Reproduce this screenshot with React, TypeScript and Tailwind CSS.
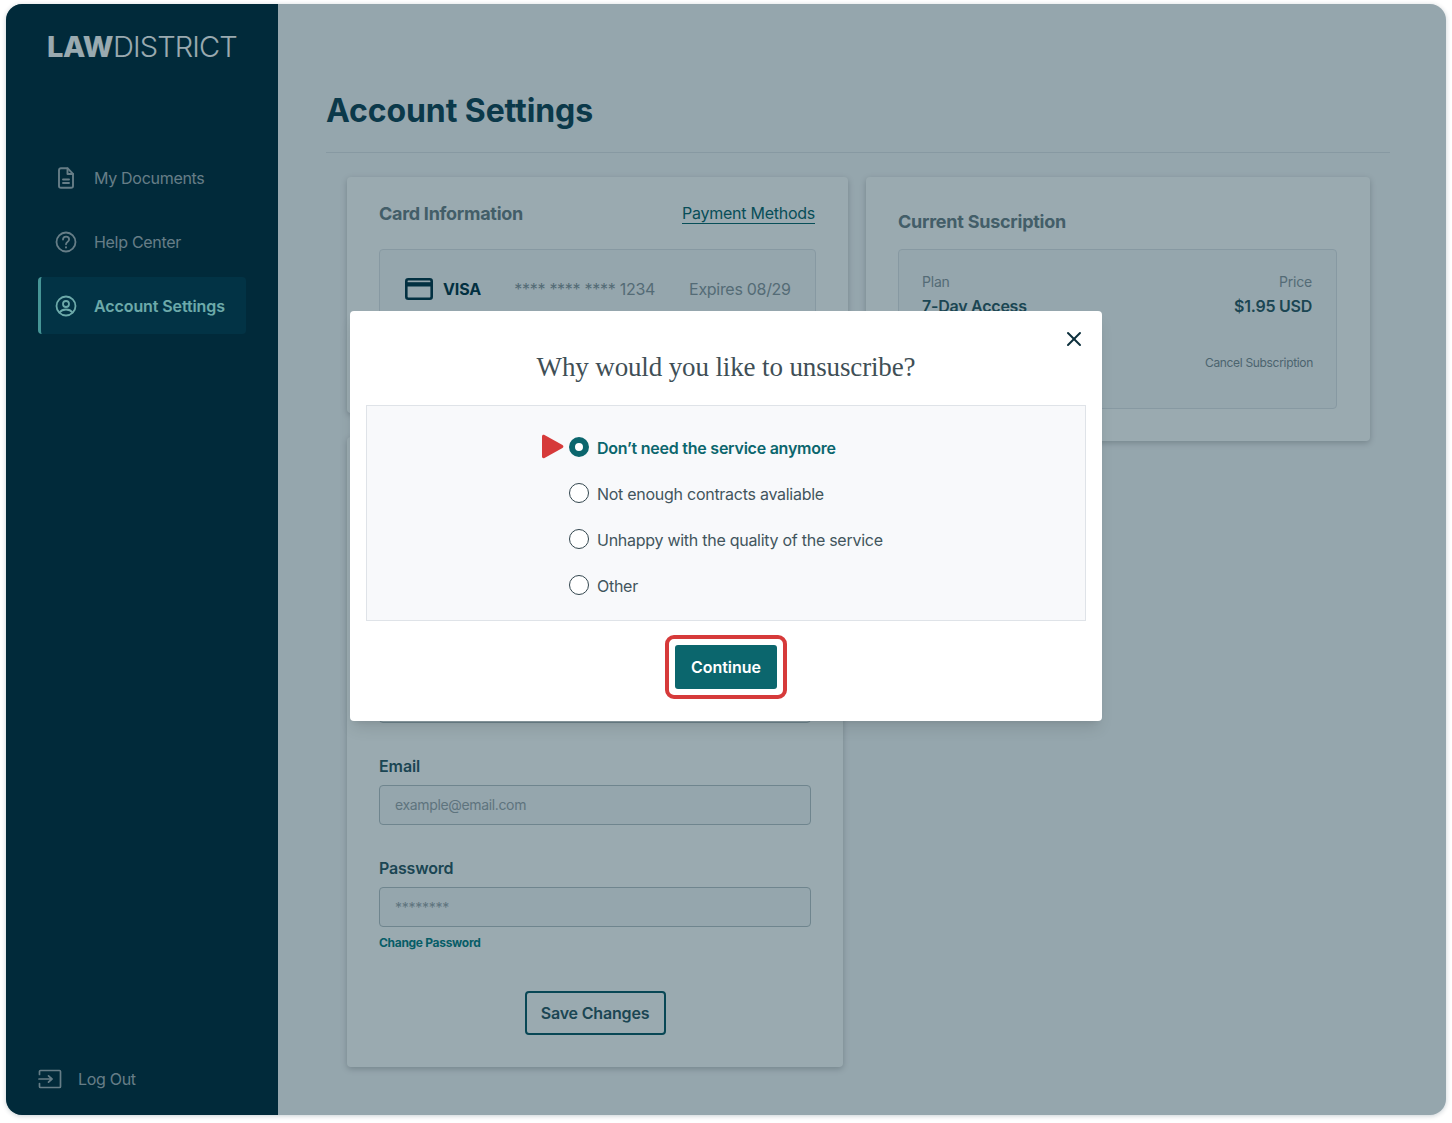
import React from 'react';
import { X } from 'lucide-react';

const DocIcon = () => (
    <svg width="20" height="22" viewBox="0 0 20 22" fill="none" stroke="currentColor" strokeWidth="1.9" strokeLinejoin="round" strokeLinecap="round">
        <path d="M3 3.200C3 2 3.800 1.200 5 1.200h6.500L17 6.800V19c0 1-.8 1.800-2 1.800H5c-1.200 0-2-.8-2-1.800V3.200z" />
        <path d="M11.500 1.500V7H17" />
        <path d="M7 12.500h6M7 16h6" />
    </svg>
);

const HelpIcon = () => (
    <svg width="22" height="22" viewBox="0 0 22 22" fill="none" stroke="currentColor" strokeWidth="1.8" strokeLinecap="round">
        <circle cx="11" cy="11" r="9.500" />
        <path d="M8 8.600c0-1.800 1.400-3 3.100-3 1.700 0 3 1.200 3 2.800 0 2.400-3.100 2.500-3.100 4.900" />
        <path d="M11 16.300v.1" strokeWidth="2" />
    </svg>
);

const UserIcon = () => (
    <svg width="22" height="22" viewBox="0 0 22 22" fill="none" stroke="currentColor" strokeWidth="1.8" strokeLinecap="round">
        <circle cx="11" cy="11" r="9.500" />
        <circle cx="11" cy="9" r="3" />
        <path d="M4.500 17.500c1.500-2 3.800-3 6.500-3s5 1 6.500 3" />
    </svg>
);

const LogOutIcon = () => (
    <svg width="24" height="20" viewBox="0 0 24 20" fill="none" stroke="currentColor" strokeWidth="1.7" strokeLinejoin="round" strokeLinecap="round">
        <path d="M1.500 5.500V2.500c0-.6.400-1 1-1h19c.6 0 1 .4 1 1v15c0 .6-.4 1-1 1h-19c-.6 0-1-.4-1-1v-3" />
        <path d="M1 10h13M10.500 6.800 14 10l-3.500 3.200" />
    </svg>
);

const CardIcon = () => (
    <svg width="28" height="22" viewBox="0 0 28 22" fill="none">
        <rect x="1.300" y="1.300" width="25.400" height="19.400" rx="2" stroke="#033446" strokeWidth="2.600" />
        <rect x="1.300" y="4.200" width="25.400" height="4.300" fill="#033446" />
    </svg>
);

const reasons = ['Not enough contracts avaliable', 'Unhappy with the quality of the service', 'Other'];

const App: React.FC = () => {
    return (
        <div className="h-[1123px] w-[1452px] bg-white pl-[6px] pt-[4px] overflow-hidden font-['Inter',sans-serif]">
            <div className="relative flex h-[1111px] w-[1440px] overflow-hidden rounded-2xl bg-[#f7f8fa] shadow-[0_1px_5px_rgba(3,42,58,0.22)]">
                {/* sidebar */}
                <aside className="flex w-[272px] shrink-0 flex-col bg-[#012b3b] pb-[24px] pl-[32px] pr-[32px]">
                    <div className="mt-[24px] ml-[9px] text-[29px] leading-[38px] text-white">
                        <span className="font-extrabold tracking-[-0.4px]">LAW</span>
                        <span className="font-light tracking-[-0.85px]">DISTRICT</span>
                    </div>
                    <nav className="mt-[83px] flex flex-col gap-[7px]">
                        <a className="flex h-[57px] items-center gap-[18px] pl-[18px] text-base tracking-[-0.3px] text-[#a9b5bb]">
                            <span className="flex w-[20px] justify-center"><DocIcon /></span>
                            My Documents
                        </a>
                        <a className="flex h-[57px] items-center gap-[18px] pl-[18px] text-base tracking-[-0.3px] text-[#a9b5bb]">
                            <span className="-mx-px"><HelpIcon /></span>
                            Help Center
                        </a>
                        <a className="flex h-[57px] w-[208px] items-center gap-[18px] rounded border-l-[3px] border-[#73ddd4] bg-[#03394d] pl-[15px] text-base font-semibold tracking-[-0.1px] text-[#b4fff5]">
                            <span className="-mx-px"><UserIcon /></span>
                            Account Settings
                        </a>
                    </nav>
                    <a className="mt-auto flex items-center gap-[16px] text-base tracking-[-0.3px] text-[#a9b5bb]">
                        <LogOutIcon />
                        Log Out
                    </a>
                </aside>

                {/* page */}
                <main className="flex-1 pl-[48px] pr-[56px]">
                    <h1 className="mt-[85px] text-[32px] font-bold leading-[44px] tracking-[-0.1px] text-[#124455]">Account Settings</h1>
                    <div className="mt-[19px] border-t border-[#dfe3e8]" />
                    <div className="mt-[24px] flex items-start gap-[18px] pl-[21px]">
                        <div className="flex w-[501px] flex-col gap-[24px]">
                            <section className="h-[236px] rounded bg-white px-[32px] pt-[23px] shadow-[0_2px_6px_rgba(0,0,0,0.22)]">
                                <div className="flex items-center justify-between">
                                    <h2 className="text-lg font-bold tracking-[-0.28px] text-[#6e8088]">Card Information</h2>
                                    <a className="mr-px border-b border-[#0b666d] text-base leading-[19px] tracking-[-0.25px] text-[#0b666d]">Payment Methods</a>
                                </div>
                                <div className="mt-[21px] flex h-[132px] items-start rounded border border-[#dfe3e8] bg-[#f7f8fa] pl-[25px] pt-[28px]">
                                    <CardIcon />
                                    <span className="ml-[10px] -mt-px font-bold tracking-[-0.1px] text-[#033446]">VISA</span>
                                    <span className="ml-[33px] -mt-px tracking-[-0.28px] text-[#8b979e]">**** **** **** 1234</span>
                                    <span className="ml-[34px] -mt-px tracking-[-0.3px] text-[#8b979e]">Expires 08/29</span>
                                </div>
                            </section>
                            <section className="flex h-[630px] w-[496px] flex-col rounded bg-white px-[32px] pb-[32px] shadow-[0_2px_6px_rgba(0,0,0,0.22)]">
                                <div className="mt-auto h-[40px] rounded border border-[#b7c1c6] bg-[#f7f8fa]" />
                                <label className="mt-[32px] block text-base font-semibold leading-[22px] tracking-[-0.1px] text-[#2d5864]">Email</label>
                                <input
                                    readOnly
                                    placeholder="example@email.com"
                                    className="mt-[8px] block h-[40px] w-full rounded border border-[#b7c1c6] bg-[#f7f8fa] px-[15px] pb-px text-sm tracking-[-0.35px] outline-none placeholder:text-[#9ca6ac]"
                                />
                                <label className="mt-[32px] block text-base font-semibold leading-[22px] tracking-[-0.2px] text-[#2d5864]">Password</label>
                                <input
                                    readOnly
                                    placeholder="********"
                                    className="mt-[8px] block h-[40px] w-full rounded border border-[#b7c1c6] bg-[#f7f8fa] px-[15px] text-sm tracking-[-0.25px] outline-none placeholder:text-[#9ca6ac]"
                                />
                                <a className="mt-[6px] text-xs font-bold leading-[20px] tracking-[-0.3px] text-[#0b7f86]">Change Password</a>
                                <button className="mx-auto mt-[38px] flex h-[44px] w-[141px] items-center justify-center rounded border-2 border-[#0d5a68] text-base font-semibold tracking-[-0.18px] text-[#2d5864]">
                                    Save Changes
                                </button>
                            </section>
                        </div>
                        <section className="h-[264px] w-[504px] rounded bg-white px-[32px] pt-[32px] shadow-[0_2px_6px_rgba(0,0,0,0.22)]">
                            <h2 className="text-lg font-bold leading-[26px] tracking-[-0.25px] text-[#6e8088]">Current Suscription</h2>
                            <div className="mt-[14px] h-[160px] w-[439px] rounded-sm border border-[#dfe3e8] bg-[#f7f8fa] px-[23px] pt-[23px]">
                                <div className="flex justify-between pr-[1px] text-sm leading-[18px] tracking-[-0.2px] text-[#8b979e]">
                                    <span>Plan</span>
                                    <span>Price</span>
                                </div>
                                <div className="mt-[4px] flex justify-between pr-[1px] text-base font-semibold leading-[22px] tracking-[-0.25px] text-[#2d5864]">
                                    <span>7-Day Access</span>
                                    <span>$1.95 USD</span>
                                </div>
                                <div className="mt-[36px] text-right text-xs leading-[20px] tracking-[-0.32px] text-[#7d8b93]">Cancel Subscription</div>
                            </div>
                        </section>
                    </div>
                </main>

                {/* dim layer and modal */}
                <div className="absolute inset-0 flex justify-center bg-[#032a3a]/40 pt-[307px]">
                    <div className="relative h-[410px] w-[752px] rounded bg-white px-[16px] pt-[37px] shadow-lg">
                        <X size={24} strokeWidth={2} className="absolute right-[16px] top-[16px] text-[#0c2f3c]" />
                        <h2 className="text-center font-['Liberation_Serif',serif] text-[27px] leading-[38px] tracking-[-0.13px] text-[#3f4f56]">
                            Why would you like to unsuscribe?
                        </h2>
                        <div className="relative mt-[19px] flex h-[216px] flex-col border border-[#dfe3e8] bg-[#f8f9fb] pl-[202px] pt-[19px]">
                            <svg width="23" height="25" viewBox="0 0 23 25" className="absolute left-[174px] top-[28px]">
                                <path d="M1 2.500C1 1 2.300.4 3.500 1l18 10c1.200.7 1.200 2.300 0 3l-18 10C2.300 24.600 1 24 1 22.500z" fill="#d63a3a" />
                            </svg>
                            <div className="flex h-[46px] items-center gap-[8px]">
                                <span className="mb-[2px] h-[20px] w-[20px] rounded-full border-[6px] border-[#0b666d] bg-white" />
                                <span className="text-base font-semibold tracking-[-0.24px] text-[#0b666d]">Don’t need the service anymore</span>
                            </div>
                            {reasons.map((reason) => (
                                <div key={reason} className="flex h-[46px] items-center gap-[8px]">
                                    <span className="mb-[2px] h-[20px] w-[20px] rounded-full border border-[#33464e] bg-white" />
                                    <span className="text-base tracking-[-0.27px] text-[#42555d]">{reason}</span>
                                </div>
                            ))}
                        </div>
                        <div className="mt-[14px] flex justify-center">
                            <div className="rounded-[9px] border-[4px] border-[#d63a3a] p-[6px]">
                                <button className="flex h-[44px] w-[102px] items-center justify-center rounded-[3px] bg-[#0b666d] text-base font-semibold tracking-[-0.05px] text-white">
                                    Continue
                                </button>
                            </div>
                        </div>
                    </div>
                </div>
            </div>
        </div>
    );
};

export default App;
